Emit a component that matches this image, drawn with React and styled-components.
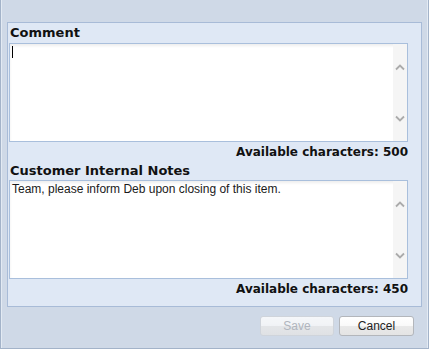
import React from 'react';
import styled, { createGlobalStyle } from 'styled-components';

const Global = createGlobalStyle`
  html, body {
    margin: 0;
    padding: 0;
    background: #ffffff;
  }
  * {
    box-sizing: border-box;
  }
`

const Window = styled.div`
  width: 429px;
  height: 349px;
  background-color: #cfd9e7;
  border: 1px solid #a3b3c9;
  border-top: none;
  box-shadow: inset 1px 0 0 #e3eaf3, inset -1px 0 0 #e3eaf3;
  padding: 22px 6px 0 6px;
  display: flex;
  flex-direction: column;
`

const Panel = styled.div`
  background-color: #dfe8f5;
  border: 1px solid #a8bbd7;
  padding: 0 13px 7px 1px;
  display: flex;
  flex-direction: column;
`

const Label = styled.div`
  height: ${p => p.$h}px;
  line-height: ${p => p.$h}px;
  font-family: "DejaVu Sans", Verdana, sans-serif;
  font-weight: bold;
  font-size: ${p => (p.$right ? 12 : 13)}px;
  color: #111;
  padding-left: 1px;
  text-align: ${p => (p.$right ? 'right' : 'left')};
  white-space: nowrap;
`

const Field = styled.div`
  height: 99px;
  background: #ffffff;
  border: 1px solid #a9bfdc;
  box-shadow: inset 0 2px 3px rgba(0, 0, 0, 0.07);
  display: flex;
`

const Text = styled.div`
  flex: 1;
  padding: 1px 2px;
  font-family: "Liberation Sans", Tahoma, sans-serif;
  font-size: 12px;
  line-height: 15px;
  color: #1a1a1a;
`

const Caret = styled.span`
  display: inline-block;
  width: 1px;
  height: 12px;
  margin-top: 1px;
  background: #000;
`

const Track = styled.div`
  width: 14px;
  background: #f5f5f5;
  display: flex;
  flex-direction: column;
  justify-content: space-between;
  align-items: center;
  padding: 20px 0 19px;
`

const ButtonRow = styled.div`
  display: flex;
  justify-content: flex-end;
  gap: 5px;
  margin-top: 9px;
  padding-right: 8px;
`

const Button = styled.button`
  width: ${p => p.$w}px;
  height: 20px;
  padding: 0;
  border: 1px solid ${p => (p.disabled ? '#cfd3d9' : '#b3b6bb')};
  border-radius: 3px;
  background: linear-gradient(to bottom, #ffffff 0%, #f9f9f9 50%, #e9e9e9 52%, #e4e4e4 100%);
  font-family: "Liberation Sans", Tahoma, sans-serif;
  font-size: 12px;
  color: ${p => (p.disabled ? '#a9adb3' : '#222')};
  opacity: ${p => (p.disabled ? 0.8 : 1)};
`

const Chevron = ({ down }) => (
  <svg width="10" height="7" viewBox="0 0 10 7">
    <polyline
      points={down ? '1,1.5 5,5.5 9,1.5' : '1,5.5 5,1.5 9,5.5'}
      fill="none"
      stroke="#ababab"
      strokeWidth="1.8"
    />
  </svg>
)

const TextBox = ({ children }) => (
  <Field>
    <Text>{children}</Text>
    <Track>
      <Chevron />
      <Chevron down />
    </Track>
  </Field>
)

const App = () => {
  return (
    <>
      <Global />
      <Window>
        <Panel>
          <Label $h={20}>Comment</Label>
          <TextBox>
            <Caret />
          </TextBox>
          <Label $h={20} $right>Available characters: 500</Label>
          <Label $h={18}>Customer Internal Notes</Label>
          <TextBox>Team, please inform Deb upon closing of this item.</TextBox>
          <Label $h={20} $right>Available characters: 450</Label>
        </Panel>
        <ButtonRow>
          <Button $w={74} disabled>Save</Button>
          <Button $w={75}>Cancel</Button>
        </ButtonRow>
      </Window>
    </>
  );
};

export default App;
